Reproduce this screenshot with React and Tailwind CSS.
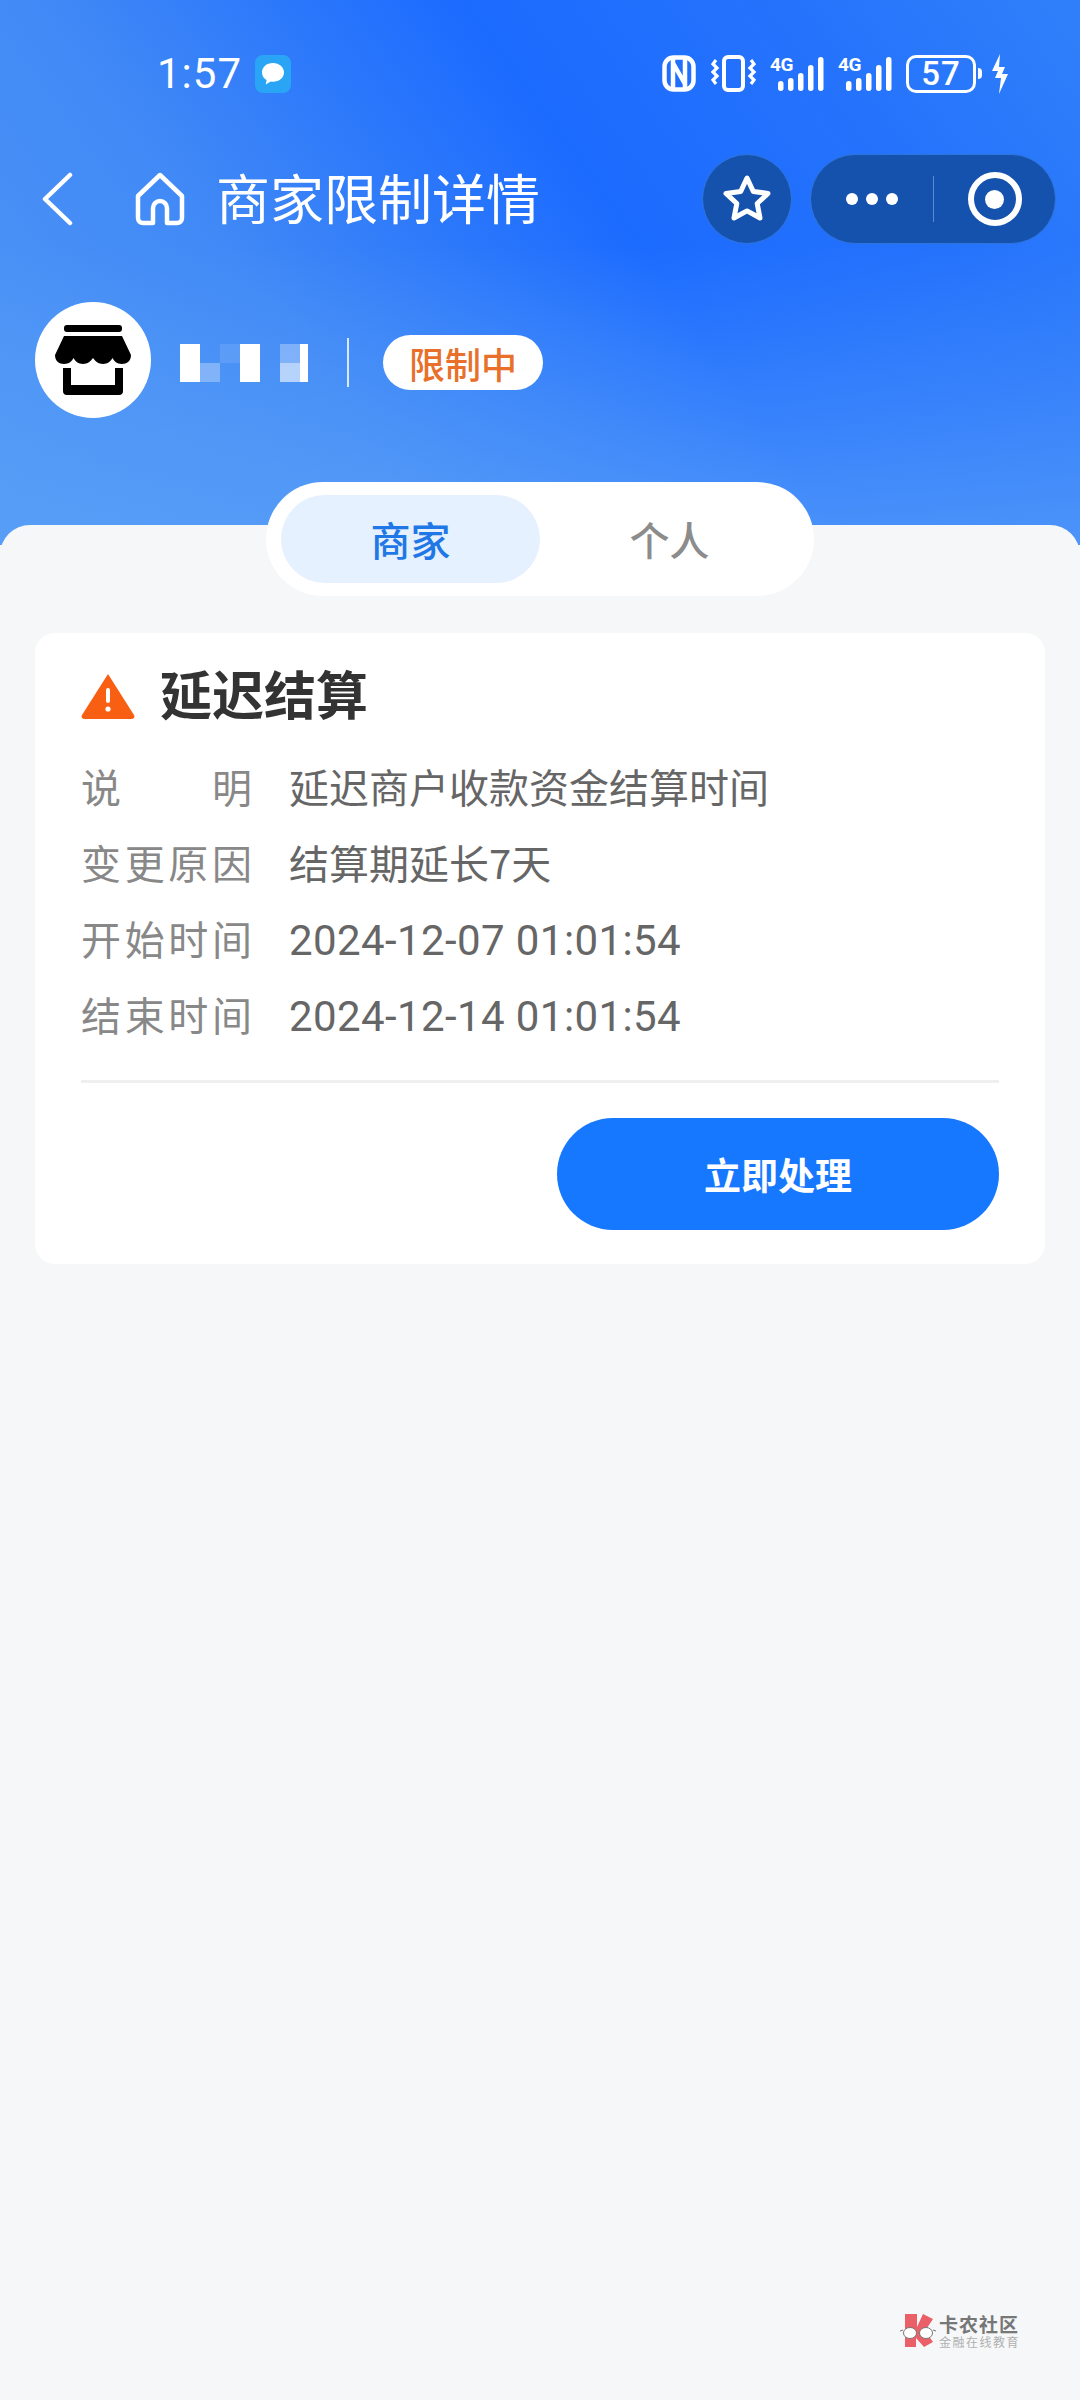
const cjk = { fontFamily: '"Noto Sans CJK SC", sans-serif' };
const num = { fontFamily: 'Roboto, "Noto Sans CJK SC", sans-serif' };

function Bubble() {
  return (
    <svg width="36" height="38" viewBox="0 0 36 38">
      <rect x="0" y="0" width="36" height="38" rx="8" fill="#2aa5f5" />
      <path d="M18 8c-6.6 0-11 4.2-11 9.4 0 3.3 1.8 6 4.6 7.7l-.9 4.4 5-3c.8.1 1.5.2 2.3.2 6.3 0 11-4.200 11-9.300S24.300 8 18 8z" fill="#fff" />
    </svg>
  );
}

function Signal() {
  return (
    <div className="relative w-[54px] h-[37px]">
      <svg width="54" height="37" viewBox="0 0 54 37">
        <g fill="#fff">
          <rect x="8" y="26" width="5.500" height="10" rx="2.700" />
          <rect x="18" y="23" width="5.500" height="13" rx="2.700" />
          <rect x="28" y="18" width="5.500" height="18" rx="2.700" />
          <rect x="38" y="10" width="5.500" height="26" rx="2.700" />
          <rect x="48" y="2" width="5.500" height="34" rx="2.700" />
        </g>
      </svg>
      <span className="absolute left-0 top-0 text-white text-[19px] font-bold leading-[19px] tracking-[-0.500px]" style={num}>4G</span>
    </div>
  );
}

function StatusIcons() {
  return (
    <div className="flex items-center">
      <svg width="34" height="37" viewBox="0 0 34 37" fill="none" stroke="#fff" strokeWidth="4.500">
        <rect x="2.500" y="2.500" width="29" height="32" rx="9" />
        <path d="M11 4v29M23 4v29M11 8l12 21" />
      </svg>
      <svg className="ml-[14px]" width="47" height="37" viewBox="0 0 47 37" fill="none" stroke="#fff">
        <rect x="14" y="2" width="19" height="33" rx="4" strokeWidth="4" />
        <path d="M6 5l-3 4 4 4-4 4 4 4-4 4 3 4M41 5l3 4-4 4 4 4-4 4 4 4-3 4" strokeWidth="3.200" />
      </svg>
      <span className="ml-[13px] flex"><Signal /></span>
      <span className="ml-[14px] flex"><Signal /></span>
      <div className="ml-[14px] w-[70px] h-[38px] rounded-[10px] border-[3px] border-white flex items-center justify-center text-white text-[33px] font-medium tracking-[1px]" style={num}>57</div>
      <div className="ml-[2px] w-[4px] h-[11px] rounded-r bg-white" />
      <svg className="ml-[8px]" width="20" height="40" viewBox="0 0 20 40" fill="#fff">
        <path d="M10 0L2 17h6l-3 7h6l-2 16 9-20h-6l3-7h-6z" />
      </svg>
    </div>
  );
}

function Nav() {
  return (
    <div className="mt-[62px] h-[90px] flex items-center pl-[41px] pr-[24px]">
      <svg width="32" height="54" viewBox="0 0 32 54" fill="none" stroke="#fff" strokeWidth="4.500" strokeLinecap="round" strokeLinejoin="round">
        <path d="M29 3L4 27l25 24" />
      </svg>
      <svg className="ml-[62px]" width="50" height="54" viewBox="0 0 50 54" fill="none" stroke="#fff" strokeWidth="4.500" strokeLinejoin="round">
        <path d="M25 3L3 24v22a5 5 0 0 0 5 5h10V36a7 7 0 0 1 14 0v15h10a5 5 0 0 0 5-5V24z" />
      </svg>
      <div className="ml-[31px] -mt-[5px] text-white text-[54px] leading-none" style={cjk}>商家限制详情</div>
      <div className="ml-auto w-[90px] h-[90px] rounded-full bg-[#1552ad] border border-[#2f74dc] flex items-center justify-center">
        <svg width="52" height="52" viewBox="0 0 52 52" fill="none" stroke="#fff" strokeWidth="5" strokeLinejoin="round">
          <path d="M26 5l6.300 13.500 14.700 1.900-10.800 10.100 2.800 14.500L26 37.900l-13 7.100 2.800-14.500L5 20.400l14.700-1.900z" />
        </svg>
      </div>
      <div className="ml-[18px] w-[246px] h-[90px] rounded-full bg-[#1552ad] border border-[#2f74dc] flex items-center">
        <div className="w-[122px] flex justify-center gap-[8px]">
          <div className="w-[12px] h-[12px] rounded-full bg-white" />
          <div className="w-[12px] h-[12px] rounded-full bg-white" />
          <div className="w-[12px] h-[12px] rounded-full bg-white" />
        </div>
        <div className="w-px h-[46px] bg-[#5b8bd0]" />
        <div className="flex-1 flex justify-center">
          <div className="w-[54px] h-[54px] rounded-full border-[6px] border-white flex items-center justify-center">
            <div className="w-[19px] h-[19px] rounded-full bg-white" />
          </div>
        </div>
      </div>
    </div>
  );
}

function StoreIcon() {
  return (
    <svg width="76" height="70" viewBox="0 0 76 70" fill="#000">
      <rect x="9" y="0" width="58" height="7" rx="3" />
      <path d="M9 11h58l9 19c0 6-4 9-9 9s-8-3-9.500-6c-1.500 3-5 6-9.500 6s-8-3-10-6c-2 3-5.500 6-10 6s-8-3-9.500-6C17 36 14 39 9 39s-9-3-9-9z" />
      <path d="M8 43h8v17h44V43h8v23a4 4 0 0 1-4 4H12a4 4 0 0 1-4-4z" />
    </svg>
  );
}

function Merchant() {
  return (
    <div className="mt-[57px] h-[117px] flex items-center pl-[35px]">
      <div className="w-[116px] h-[116px] rounded-full bg-white flex items-center justify-center">
        <StoreIcon />
      </div>
      <div className="flex items-center pt-[6px]">
        <div className="ml-[29px] w-[132px] h-[38px] flex">
          <div className="w-[20px] h-full bg-white" />
          <div className="w-[20px] h-full flex flex-col justify-end"><div className="h-[19px] bg-white/30" /></div>
          <div className="w-[20px] h-[19px] bg-white/10" />
          <div className="w-[20px] h-full bg-white" />
          <div className="w-[20px]" />
          <div className="w-[20px] h-full flex flex-col"><div className="h-[19px] bg-white/30" /><div className="h-[19px] bg-white/60" /></div>
          <div className="w-[8px] h-full bg-white" />
        </div>
        <div className="ml-[35px] w-[2px] h-[49px] bg-white/80" />
        <div className="ml-[34px] w-[160px] h-[55px] rounded-full bg-white flex items-center justify-center text-[#e8702a] text-[36px] font-medium leading-none" style={cjk}>限制中</div>
      </div>
    </div>
  );
}

function Row({ label, value, isNum }) {
  return (
    <div className="h-[76px] flex items-center text-[40px] leading-none">
      <div className="w-[171px] flex justify-between text-[#888888]" style={cjk}>
        {label.split('').map((c, i) => <span key={i}>{c}</span>)}
      </div>
      <div className={isNum ? 'ml-[37px] pt-[5px] text-[42px] text-[#666666] tracking-[0.400px]' : 'ml-[37px] text-[#666666]'} style={isNum ? num : cjk}>{value}</div>
    </div>
  );
}

function Logo() {
  return (
    <svg width="36" height="36" viewBox="0 0 36 36">
      <path d="M5 1h12v13L23 1l10 5-8 12 8 11-9 5-8-9v9H5z" fill="#ea5f68" />
      <ellipse cx="10" cy="20" rx="6.500" ry="5.500" fill="#fff" stroke="#777" strokeWidth="1" />
      <ellipse cx="26" cy="20" rx="6.500" ry="5.500" fill="#fff" stroke="#777" strokeWidth="1" />
      <path d="M0 18l3-1M33 17l3 1" stroke="#777" strokeWidth="1" />
    </svg>
  );
}

export default function App() {
  return (
    <div className="relative w-[1080px] h-[2400px] bg-[#f6f7f8] overflow-hidden">
      <div className="h-[545px] pt-[55px] bg-[linear-gradient(180deg,rgba(90,160,248,0)_45%,rgba(90,160,248,0.75)_100%),linear-gradient(54deg,#5098f5_0%,#4189f6_30%,#1c6bff_58%,#2573fc_80%,#3080fa_100%)]">
        <div className="h-[37px] flex items-center justify-between pl-[157px] pr-[70px]">
          <div className="flex items-center">
            <span className="text-white text-[42px] leading-none tracking-[1px]" style={num}>1:57</span>
            <span className="ml-[13px] flex"><Bubble /></span>
          </div>
          <StatusIcons />
        </div>
        <Nav />
        <Merchant />
      </div>
      <div className="-mt-[20px] h-[1875px] rounded-t-[30px] bg-[#f6f7f8] flex flex-col items-center">
        <div className="-mt-[43px] w-[548px] h-[114px] rounded-full bg-white flex items-center pl-[15px]">
          <div className="w-[259px] h-[88px] rounded-full bg-[#e6f1ff] flex items-center justify-center text-[#1f78e6] text-[40px] font-medium leading-none" style={cjk}>商家</div>
          <div className="w-[259px] flex items-center justify-center text-[#8c8c8c] text-[40px] font-medium leading-none" style={cjk}>个人</div>
        </div>
        <div className="mt-[37px] w-[1010px] h-[631px] rounded-[20px] bg-white px-[46px]">
          <div className="h-[126px] flex items-center">
            <svg width="54" height="46" viewBox="0 0 54 46">
              <path d="M27 1L53 42a2.500 2.500 0 0 1-2 4H3a2.500 2.500 0 0 1-2-4z" fill="#f95f13" />
              <rect x="25" y="15" width="4" height="15" rx="2" fill="#fff" />
              <circle cx="27" cy="36" r="2.600" fill="#fff" />
            </svg>
            <div className="ml-[25px] -mt-[6px] text-[52px] font-bold leading-none text-[#333333]" style={cjk}>延迟结算</div>
          </div>
          <div className="-mt-[11px]">
            <Row label="说明" value="延迟商户收款资金结算时间" />
            <Row label="变更原因" value="结算期延长7天" />
            <Row label="开始时间" value="2024-12-07 01:01:54" isNum />
            <Row label="结束时间" value="2024-12-14 01:01:54" isNum />
          </div>
          <div className="mt-[28px] h-[3px] bg-[#efefef]" />
          <div className="mt-[35px] flex justify-end">
            <div className="w-[442px] h-[112px] rounded-full bg-[#1677ff] flex items-center justify-center text-white text-[37px] font-bold leading-none" style={cjk}>立即处理</div>
          </div>
        </div>
      </div>
      <div className="absolute left-[900px] top-[2313px] flex items-center">
        <Logo />
        <div className="ml-[3px]">
          <div className="text-[#777777] text-[19px] font-bold leading-[22px] tracking-[1px]" style={cjk}>卡农社区</div>
          <div className="text-[#b0b0b0] text-[12px] leading-[14px] tracking-[1.500px]" style={cjk}>金融在线教育</div>
        </div>
      </div>
    </div>
  );
}
